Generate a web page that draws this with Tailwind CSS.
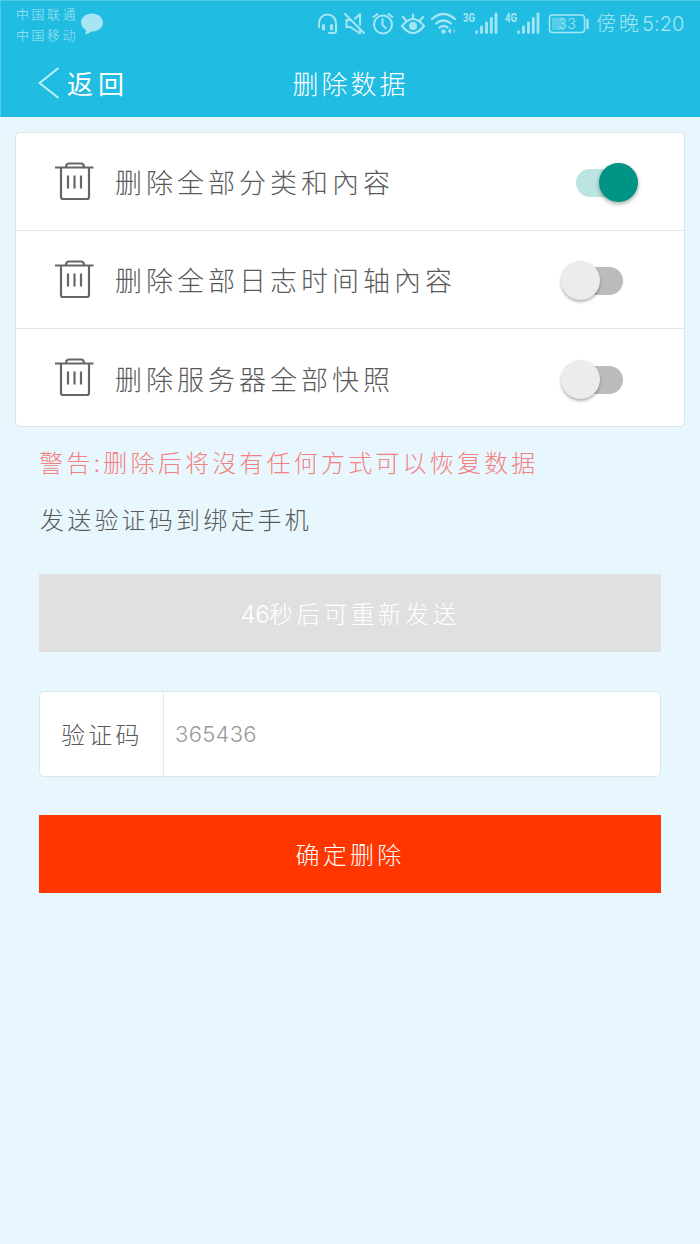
<!DOCTYPE html>
<html lang="zh-CN">
<head>
    <meta charset="UTF-8">
    <meta name="viewport" content="width=device-width, initial-scale=1.0">
    <title>删除数据</title>
    <script src="https://cdn.jsdelivr.net/npm/@tailwindcss/browser@4"></script>
</head>
<body class="bg-[#e8f7fe] min-h-screen font-light font-['Inter','Noto_Sans_CJK_SC',sans-serif] text-[#595959]">

    <header class="h-[117px] bg-[#21bce1] border-t border-l border-t-[#4fcbe8] border-l-[#4fcbe8] overflow-hidden">
        <!-- status bar -->
        <div class="h-[49px] flex items-start text-[#a6e6f4]">
            <div class="w-[64px] ml-[15px] mt-[3px] text-[13px] leading-[21px] tracking-[2.5px] whitespace-nowrap">
                <p>中国联通</p>
                <p>中国移动</p>
            </div>
            <svg class="w-6 h-6 mt-[11px]" viewBox="0 0 24 24" fill="currentColor">
                <path d="M12 1.500C5.900 1.500 1 5.400 1 10.500C1 14 3 16.600 6 18.200C6 19.800 5.500 21 4.500 22.500C7.500 22 9.500 21 11 19.500C18 20 23 15.500 23 10.500C23 5.400 18.100 1.500 12 1.500Z"/>
            </svg>
            <svg class="w-[292px] h-[40px] ml-[195px]" viewBox="299 1 292 40" fill="none" stroke="currentColor" stroke-width="2" stroke-linecap="round" stroke-linejoin="round">
                <!-- headset -->
                <path d="M319 27V23a8.500 8.500 0 0 1 17 0V31a2 2 0 0 1-2 2h-5"/>
                <path d="M323.500 25.500v3.500M331.500 25.500v3.500" stroke-width="3.200"/>
                <!-- muted -->
                <path d="M345 14l19 19"/>
                <path d="M360 25V14l-5 4.500M351 20h-4.500v7h4l9.500 6.500v-3"/>
                <!-- alarm -->
                <circle cx="383" cy="24.500" r="9"/>
                <path d="M382.500 19v6l3 3M373.500 17l4-3M392.500 17l-4-3"/>
                <!-- eye -->
                <path d="M402 26q11-14 22 0q-11 14-22 0zM413 14.500v4M403 17l3 3.500M423 17l-3 3.500" stroke-width="2.200"/>
                <circle cx="413" cy="26" r="4" fill="currentColor" stroke="none"/>
                <!-- wifi -->
                <path d="M432 19q11.500-10 23 0M436 23.500q7.500-6 15 0M439.500 27.500q4-3 8 0" stroke-width="2.200"/>
                <circle cx="443.500" cy="31.500" r="2.300" fill="currentColor" stroke="none"/>
                <path d="M451 28v6l-3.500-3z" fill="currentColor" stroke="none"/>
                <path d="M453 28v6l3-3z" fill="currentColor" fill-opacity=".4" stroke="none"/>
                <!-- signal bars -->
                <path d="M476.500 32v.5M481.500 27v5.500M486.500 23v9.500M491.300 18.500v14M496 14v18.500M518.500 32v.5M523.500 27v5.500M528.500 23v9.500M533.300 18.500v14M538 14v18.500" stroke-width="2.800"/>
                <g fill="currentColor" stroke="none" font-family="Roboto" font-weight="700" font-size="13">
                    <text x="463" y="22" textLength="12" lengthAdjust="spacingAndGlyphs">3G</text>
                    <text x="505" y="22" textLength="12" lengthAdjust="spacingAndGlyphs">4G</text>
                </g>
                <!-- battery -->
                <rect x="549.500" y="15" width="35" height="17.500" rx="3" stroke-width="1.500"/>
                <rect x="552" y="17.500" width="12" height="12.500" fill="currentColor" fill-opacity=".4" stroke="none"/>
                <path d="M587.500 20v8" stroke-width="2.500"/>
                <text x="558" y="28.500" fill="currentColor" stroke="none" font-family="Inter" font-size="14" textLength="18" lengthAdjust="spacingAndGlyphs">33</text>
            </svg>
            <div class="ml-[5px] mt-[7px] flex text-[20px] leading-[32px] whitespace-nowrap"><span class="tracking-[3px]">傍晚</span><span class="tracking-[0.1px]">5:20</span></div>
        </div>
        <!-- title bar -->
        <div class="h-[67px] grid grid-cols-3 items-center text-white pt-[3px]">
            <div class="flex items-center pl-[37px]">
                <svg class="w-[22px] h-8 -mt-[5px]" viewBox="0 0 22 32" fill="none" stroke="#c4f1fa" stroke-width="1.800">
                    <path d="M20.500 1L1.500 16L20.500 31"/>
                </svg>
                <span class="ml-[7px] text-[26px] leading-8 tracking-[5px] font-normal whitespace-nowrap">返回</span>
            </div>
            <h1 class="text-center text-[26px] leading-8 tracking-[3px]">删除数据</h1>
        </div>
    </header>

    <main>
        <ul class="mx-[15px] mt-[15px] h-[295px] bg-white border border-[#dde5e8] rounded-[5px] divide-y divide-[#e2e6e8] text-[27px] tracking-[4px]">
            <li class="h-[98px] flex items-center pl-[39px] pr-[46px]">
                <svg class="w-10 h-10 -mt-[2px]" viewBox="0 0 40 40" fill="none" stroke="#666" stroke-width="2.200">
                    <path d="M0 6.500H38.500M11 6.500q0-4 3-4h12q3 0 3 4M6 7V36q0 2 2 2H32q2 0 2-2V7M13 14.500V27.500M19.500 14.500V27.500M26 14.500V27.500"/>
                </svg>
                <span class="ml-5 pt-[6px] flex-1">删除全部分类和內容</span>
                <span class="relative w-[62px] h-10 flex items-center mt-[3px]">
                    <span class="w-[47px] h-7 rounded-full bg-[#bce4e0]"></span>
                    <span class="absolute right-0 top-0 size-[39px] rounded-full bg-[#009485] shadow-[0_2px_4px_rgba(0,0,0,0.35)]"></span>
                </span>
            </li>
            <li class="h-[98px] flex items-center pl-[39px] pr-[61px]">
                <svg class="w-10 h-10 -mt-[2px]" viewBox="0 0 40 40" fill="none" stroke="#666" stroke-width="2.200">
                    <path d="M0 6.500H38.500M11 6.500q0-4 3-4h12q3 0 3 4M6 7V36q0 2 2 2H32q2 0 2-2V7M13 14.500V27.500M19.500 14.500V27.500M26 14.500V27.500"/>
                </svg>
                <span class="ml-5 pt-[6px] flex-1">删除全部日志时间轴內容</span>
                <span class="relative w-[62px] h-10 flex items-center justify-end mt-[3px]">
                    <span class="w-[47px] h-7 rounded-full bg-[#bbb]"></span>
                    <span class="absolute left-0 top-0 size-[39px] rounded-full bg-[#ececec] shadow-[0_2px_3px_rgba(0,0,0,0.3)]"></span>
                </span>
            </li>
            <li class="h-[98px] flex items-center pl-[39px] pr-[61px]">
                <svg class="w-10 h-10 -mt-[2px]" viewBox="0 0 40 40" fill="none" stroke="#666" stroke-width="2.200">
                    <path d="M0 6.500H38.500M11 6.500q0-4 3-4h12q3 0 3 4M6 7V36q0 2 2 2H32q2 0 2-2V7M13 14.500V27.500M19.500 14.500V27.500M26 14.500V27.500"/>
                </svg>
                <span class="ml-5 pt-[6px] flex-1">删除服务器全部快照</span>
                <span class="relative w-[62px] h-10 flex items-center justify-end mt-[3px]">
                    <span class="w-[47px] h-7 rounded-full bg-[#bbb]"></span>
                    <span class="absolute left-0 top-0 size-[39px] rounded-full bg-[#ececec] shadow-[0_2px_3px_rgba(0,0,0,0.3)]"></span>
                </span>
            </li>
        </ul>

        <div class="mx-[39px] text-[24px] tracking-[3.2px]">
            <p class="mt-[21px] leading-8 text-[#f58080] whitespace-nowrap">警告:删除后将沒有任何方式可以恢复数据</p>
            <p class="mt-[25px] leading-8 pl-px">发送验证码到绑定手机</p>

            <button class="block w-full h-[78px] mt-[37px] bg-[#e0e0e0] text-white pt-[3px] tracking-[3.2px]"><span class="tracking-[-0.5px]">46</span>秒后可重新发送</button>

            <div class="flex h-[86px] mt-[39px] bg-white border border-[#dbe6ea] rounded-[5px]">
                <label for="code" class="w-[124px] flex items-center pl-[21px] pt-[3px] border-r border-[#e5e8ea]">验证码</label>
                <input id="code" type="text" value="365436" class="flex-1 pl-[11px] text-[22px] tracking-[0.3px] text-[#999] outline-none">
            </div>

            <button class="block w-full h-[78px] mt-[38px] bg-[#ff3600] text-white pt-[3px] tracking-[3.2px]">确定删除</button>
        </div>
    </main>
</body>
</html>
